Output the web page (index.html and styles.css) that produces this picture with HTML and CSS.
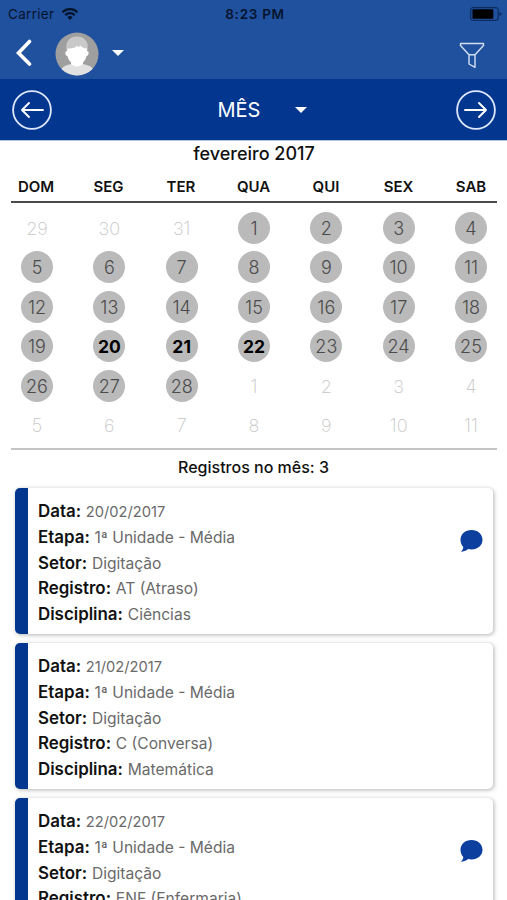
FILE: index.html
```html
<!DOCTYPE html>
<html lang="pt-BR">
<head>
  <meta charset="UTF-8">
  <meta name="viewport" content="width=device-width, initial-scale=1.0">
  <title>Registros</title>
  <link rel="stylesheet" href="styles.css">
</head>
<body>

  <header class="header">
    <div class="status">
      <div class="carrier">
        <span>Carrier</span>
        <svg width="18" height="14" viewBox="0 0 18 14">
          <path d="M1.5 5.2a10.6 10.6 0 0 1 15 0M4.3 8.1a6.7 6.7 0 0 1 9.4 0" fill="none" stroke="#05132b" stroke-width="2.3"/>
          <path d="M6.3 10.2a3.9 3.9 0 0 1 5.4 0L9 13z" fill="#05132b"/>
        </svg>
      </div>
      <span class="clock">8:23 PM</span>
      <svg class="battery" width="33" height="14" viewBox="0 0 33 14">
        <rect x="1.7" y="0.7" width="27.5" height="12.6" rx="2.5" fill="none" stroke="#0c2c60" stroke-width="1.2"/>
        <rect x="3.5" y="2.3" width="20.8" height="9.4" rx="0.8" fill="#000"/>
        <path d="M30.5 5v4q2-.6 2-2t-2-2z" fill="#0c2c60"/>
      </svg>
    </div>
    <div class="toolbar">
      <svg class="back" width="18" height="28" viewBox="0 0 18 28">
        <path d="M14.5 2.5 3.5 14l11 11" fill="none" stroke="#fff" stroke-width="3.6" stroke-linecap="round" stroke-linejoin="miter"/>
      </svg>
      <svg class="avatar" width="44" height="44" viewBox="0 0 44 44">
        <clipPath id="face"><circle cx="22" cy="22" r="21.5"/></clipPath>
        <g clip-path="url(#face)">
          <rect width="44" height="44" fill="#a09f9f"/>
          <path d="M5 44c0-8 3-10 11-12h12c8 2 12 4 12 12z" fill="#e1e1e1"/>
          <path d="M16 27h12v5q-6 5-12 0z" fill="#fff"/>
          <path d="M11.500 18C10 9 15 4.500 22 4.500S34 9 32.500 18z" fill="#c9c9c9"/>
          <path d="M12.500 16.500q7 .5 10-3l.5 2 2.500-2q1.500 2.500 6.500 3v2.500c2.500-.5 2 5-.5 5-1 5-5 8.500-9.500 8.500s-8.500-3.500-9.500-8.500c-2.500 0-3-5.500-.5-5z" fill="#fff"/>
        </g>
      </svg>
      <span class="caret"></span>
      <svg class="filter" width="26" height="28" viewBox="0 0 26 28">
        <path d="M1.500 1.500h23v2l-8.500 9.300v12.500l-6-3.300v-9.200L1.500 3.500zM10 12.800h6" fill="none" stroke="#d3e0f4" stroke-width="1.400" stroke-linejoin="round"/>
      </svg>
    </div>
  </header>

  <nav class="period">
    <svg width="40" height="40" viewBox="0 0 40 40">
      <circle cx="20" cy="20" r="18.900" fill="none" stroke="#dfe8fb" stroke-width="1.800"/>
      <path d="M31 20H10M17 13l-7 7 7 7" fill="none" stroke="#fff" stroke-width="1.900" stroke-linecap="round" stroke-linejoin="round"/>
    </svg>
    <div class="period-select">
      <span>MÊS</span>
      <span class="caret"></span>
    </div>
    <svg width="40" height="40" viewBox="0 0 40 40">
      <circle cx="20" cy="20" r="18.900" fill="none" stroke="#dfe8fb" stroke-width="1.800"/>
      <path d="M9 20h21M23 13l7 7-7 7" fill="none" stroke="#fff" stroke-width="1.900" stroke-linecap="round" stroke-linejoin="round"/>
    </svg>
  </nav>

  <section class="calendar">
    <h1>fevereiro 2017</h1>
    <div class="weekdays">
      <span>DOM</span><span>SEG</span><span>TER</span><span>QUA</span><span>QUI</span><span>SEX</span><span>SAB</span>
    </div>
    <div class="days">
      <span class="out">29</span><span class="out">30</span><span class="out">31</span><span>1</span><span>2</span><span>3</span><span>4</span>
      <span>5</span><span>6</span><span>7</span><span>8</span><span>9</span><span>10</span><span>11</span>
      <span>12</span><span>13</span><span>14</span><span>15</span><span>16</span><span>17</span><span>18</span>
      <span>19</span><span class="marked">20</span><span class="marked">21</span><span class="marked">22</span><span>23</span><span>24</span><span>25</span>
      <span>26</span><span>27</span><span>28</span><span class="out">1</span><span class="out">2</span><span class="out">3</span><span class="out">4</span>
      <span class="out">5</span><span class="out">6</span><span class="out">7</span><span class="out">8</span><span class="out">9</span><span class="out">10</span><span class="out">11</span>
    </div>
  </section>

  <h2 class="total">Registros no mês: 3</h2>

  <main class="records">
    <article class="record">
      <div class="fields">
        <p><b>Data:</b> <span class="date">20/02/2017</span></p>
        <p><b>Etapa:</b> <span>1ª Unidade - Média</span></p>
        <p><b>Setor:</b> <span>Digitação</span></p>
        <p><b>Registro:</b> <span>AT (Atraso)</span></p>
        <p><b>Disciplina:</b> <span>Ciências</span></p>
      </div>
      <svg class="comment" width="23" height="22" viewBox="0 0 23 22">
        <path d="M11.500 0C17.800 0 22.500 4.200 22.500 9.800S17.800 19.500 11.500 19.500c-1.200 0-2.300-.1-3.300-.4C6 21 3.500 21.800.8 21.800c1.500-1.300 2.500-2.800 2.500-4.700C1.500 15.300.5 12.700.5 9.800.5 4.200 5.200 0 11.500 0z" fill="#0c3f9e"/>
      </svg>
    </article>

    <article class="record">
      <div class="fields">
        <p><b>Data:</b> <span class="date">21/02/2017</span></p>
        <p><b>Etapa:</b> <span>1ª Unidade - Média</span></p>
        <p><b>Setor:</b> <span>Digitação</span></p>
        <p><b>Registro:</b> <span>C (Conversa)</span></p>
        <p><b>Disciplina:</b> <span>Matemática</span></p>
      </div>
    </article>

    <article class="record">
      <div class="fields">
        <p><b>Data:</b> <span class="date">22/02/2017</span></p>
        <p><b>Etapa:</b> <span>1ª Unidade - Média</span></p>
        <p><b>Setor:</b> <span>Digitação</span></p>
        <p><b>Registro:</b> <span>ENF (Enfermaria)</span></p>
      </div>
      <svg class="comment" width="23" height="22" viewBox="0 0 23 22">
        <path d="M11.500 0C17.800 0 22.500 4.200 22.500 9.800S17.800 19.500 11.500 19.500c-1.200 0-2.300-.1-3.300-.4C6 21 3.500 21.800.8 21.800c1.500-1.300 2.500-2.800 2.500-4.700C1.500 15.300.5 12.700.5 9.800.5 4.200 5.200 0 11.500 0z" fill="#0c3f9e"/>
      </svg>
    </article>
  </main>

</body>
</html>
```
FILE: styles.css
```css
* {
  box-sizing: border-box;
}

body {
  margin: 0;
  height: 900px;
  overflow: hidden;
  background-color: #fff;
  color: #111;
  font-family: Inter, "Liberation Sans", sans-serif;
}

svg {
  display: block;
  flex: none;
}

.header {
  height: 79px;
  background-color: #20519f;
}

.status {
  display: grid;
  grid-template-columns: 1fr auto 1fr;
  align-items: center;
  height: 27px;
  padding: 0 5px 0 8px;
  color: #05132b;
  font-size: 13.5px;
}

.carrier {
  display: flex;
  align-items: center;
  gap: 7px;
  letter-spacing: 0.3px;
}

.clock {
  font-weight: 600;
  font-size: 13.5px;
  letter-spacing: 0.7px;
}

.battery {
  justify-self: end;
}

.toolbar {
  display: flex;
  align-items: center;
  height: 52px;
  padding: 0 22px 0 15px;
}

.avatar {
  margin: 2px 0 0 22px;
}

.caret {
  border-left: 6px solid transparent;
  border-right: 6px solid transparent;
  border-top: 6px solid #fff;
}

.toolbar .caret {
  margin-left: 13px;
}

.filter {
  margin: 6px 0 0 auto;
}

.period {
  display: flex;
  align-items: center;
  justify-content: space-between;
  height: 62px;
  padding: 0 11px 0 12px;
  background-color: #03378f;
  border-bottom: 1px solid #b3c5e4;
}

.period-select {
  display: flex;
  align-items: center;
  gap: 35px;
  margin-left: 17px;
  color: #fff;
  font-size: 20px;
}

.calendar {
  margin: 0 10px 0 11px;
  border-bottom: 2px solid #c4c4c4;
}

h1 {
  margin: 0;
  height: 29px;
  line-height: 26px;
  font-size: 18px;
  font-weight: 500;
  text-align: center;
}

.weekdays,
.days {
  display: grid;
  grid-template-columns: repeat(7, 32px);
  justify-content: space-between;
  justify-items: center;
  padding: 0 10px;
}

.weekdays {
  height: 33px;
  padding-left: 9px;
  line-height: 34px;
  border-bottom: 2px solid #4a4a4a;
  font-size: 15px;
  font-weight: 600;
}

.days {
  grid-auto-rows: 32px;
  row-gap: 7.4px;
  padding-top: 9px;
  padding-bottom: 7px;
}

.days span {
  width: 32px;
  height: 32px;
  border-radius: 50%;
  background-color: #bababa;
  color: #4a4a4a;
  font-size: 18px;
  font-weight: 300;
  line-height: 33px;
  text-align: center;
}

.days .out {
  background: none;
  color: #c6c6c6;
  font-weight: 200;
}

.days .marked {
  color: #000;
  font-size: 17.5px;
  font-weight: 700;
}

.total {
  margin: 0;
  height: 38px;
  line-height: 34px;
  font-size: 16px;
  font-weight: 500;
  text-align: center;
}

.records {
  display: flex;
  flex-direction: column;
  gap: 8.5px;
  padding: 0 14px 0 15px;
}

.record {
  display: flex;
  justify-content: space-between;
  flex: none;
  height: 146.5px;
  padding: 10px 10px 0 10px;
  border-left: 13px solid #03378f;
  border-radius: 5px;
  background-color: #fff;
  box-shadow: 1px 1px 4px rgba(0, 0, 0, 0.3);
}

.record p {
  margin: 0;
  height: 25.8px;
  line-height: 26px;
  font-size: 16.9px;
  white-space: nowrap;
}

.record b {
  font-weight: 600;
}

.record span {
  color: #6a6a6a;
  font-size: 15.6px;
}

.record .date {
  font-size: 14.7px;
}

.comment {
  margin-top: 32px;
}
```
